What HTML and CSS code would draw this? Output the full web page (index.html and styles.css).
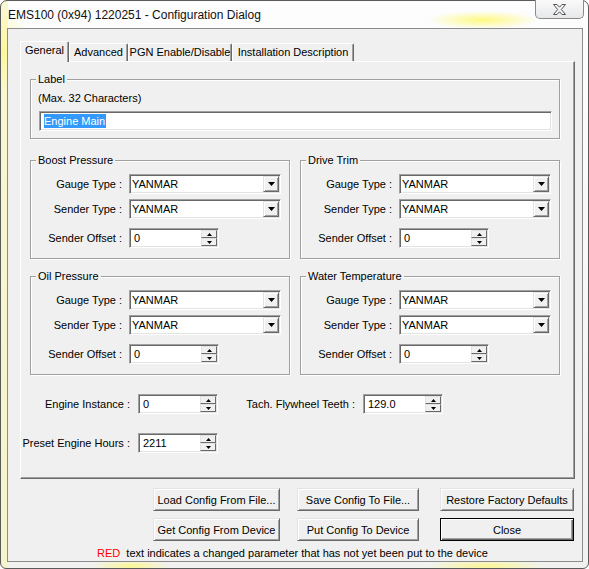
FILE: index.html
```html
<!DOCTYPE html>
<html>
<head>
<meta charset="utf-8">
<link rel="stylesheet" href="styles.css">
</head>
<body>
<div class="window">
  <div class="titlebar">
    <span class="title">EMS100 (0x94) 1220251 - Configuration Dialog</span>
    <div class="close">
      <svg width="13" height="11" viewBox="0 0 13 11"><polygon points="0.5,0.5 4,0.5 6.5,3.2 9,0.5 12.5,0.5 8.3,5.5 12.5,10.5 9,10.5 6.5,7.8 4,10.5 0.5,10.5 4.7,5.5" fill="#f4f4f4" stroke="#555" stroke-width="1" stroke-linejoin="round"/></svg>
    </div>
  </div>
  <div class="client">
    <div class="tab-strip">
      <div class="tab active w1">General</div>
      <div class="tab w2">Advanced</div>
      <div class="tab w3">PGN Enable/Disable</div>
      <div class="tab w4">Installation Description</div>
    </div>
    <div class="panel">
      <div class="group label-group">
        <span class="group-title">Label</span>
        <div class="hint">(Max. 32 Characters)</div>
        <div class="sunken textbox"><span class="sel">Engine Main</span></div>
      </div>

      <div class="groups">
        <div class="group gauge-group">
          <span class="group-title">Boost Pressure</span>
          <div class="row"><span class="lbl">Gauge Type :</span><div class="sunken combo"><span class="val">YANMAR</span><span class="drop"><svg width="7" height="4"><path d="M0 0h7L3.5 4z"/></svg></span></div></div>
          <div class="row r2"><span class="lbl">Sender Type :</span><div class="sunken combo"><span class="val">YANMAR</span><span class="drop"><svg width="7" height="4"><path d="M0 0h7L3.5 4z"/></svg></span></div></div>
          <div class="row r3"><span class="lbl">Sender Offset :</span><div class="sunken spin s90"><span class="sval">0</span><span class="spinbtns"><span class="sb"><svg width="5" height="3"><path d="M2.5 0L5 3H0z"/></svg></span><span class="sb"><svg width="5" height="3"><path d="M0 0h5L2.5 3z"/></svg></span></span></div></div>
        </div>
        <div class="group gauge-group">
          <span class="group-title">Drive Trim</span>
          <div class="row"><span class="lbl">Gauge Type :</span><div class="sunken combo"><span class="val">YANMAR</span><span class="drop"><svg width="7" height="4"><path d="M0 0h7L3.5 4z"/></svg></span></div></div>
          <div class="row r2"><span class="lbl">Sender Type :</span><div class="sunken combo"><span class="val">YANMAR</span><span class="drop"><svg width="7" height="4"><path d="M0 0h7L3.5 4z"/></svg></span></div></div>
          <div class="row r3"><span class="lbl">Sender Offset :</span><div class="sunken spin s90"><span class="sval">0</span><span class="spinbtns"><span class="sb"><svg width="5" height="3"><path d="M2.5 0L5 3H0z"/></svg></span><span class="sb"><svg width="5" height="3"><path d="M0 0h5L2.5 3z"/></svg></span></span></div></div>
        </div>
        <div class="group gauge-group">
          <span class="group-title">Oil Pressure</span>
          <div class="row"><span class="lbl">Gauge Type :</span><div class="sunken combo"><span class="val">YANMAR</span><span class="drop"><svg width="7" height="4"><path d="M0 0h7L3.5 4z"/></svg></span></div></div>
          <div class="row r2"><span class="lbl">Sender Type :</span><div class="sunken combo"><span class="val">YANMAR</span><span class="drop"><svg width="7" height="4"><path d="M0 0h7L3.5 4z"/></svg></span></div></div>
          <div class="row r3"><span class="lbl">Sender Offset :</span><div class="sunken spin s90"><span class="sval">0</span><span class="spinbtns"><span class="sb"><svg width="5" height="3"><path d="M2.5 0L5 3H0z"/></svg></span><span class="sb"><svg width="5" height="3"><path d="M0 0h5L2.5 3z"/></svg></span></span></div></div>
        </div>
        <div class="group gauge-group">
          <span class="group-title">Water Temperature</span>
          <div class="row"><span class="lbl">Gauge Type :</span><div class="sunken combo"><span class="val">YANMAR</span><span class="drop"><svg width="7" height="4"><path d="M0 0h7L3.5 4z"/></svg></span></div></div>
          <div class="row r2"><span class="lbl">Sender Type :</span><div class="sunken combo"><span class="val">YANMAR</span><span class="drop"><svg width="7" height="4"><path d="M0 0h7L3.5 4z"/></svg></span></div></div>
          <div class="row r3"><span class="lbl">Sender Offset :</span><div class="sunken spin s90"><span class="sval">0</span><span class="spinbtns"><span class="sb"><svg width="5" height="3"><path d="M2.5 0L5 3H0z"/></svg></span><span class="sb"><svg width="5" height="3"><path d="M0 0h5L2.5 3z"/></svg></span></span></div></div>
        </div>
      </div>

      <div class="misc">
        <span class="lbl">Engine Instance :</span>
        <div class="sunken spin s80"><span class="sval">0</span><span class="spinbtns"><span class="sb"><svg width="5" height="3"><path d="M2.5 0L5 3H0z"/></svg></span><span class="sb"><svg width="5" height="3"><path d="M0 0h5L2.5 3z"/></svg></span></span></div>
        <span class="lbl">Tach. Flywheel Teeth :</span>
        <div class="sunken spin s80"><span class="sval">129.0</span><span class="spinbtns"><span class="sb"><svg width="5" height="3"><path d="M2.5 0L5 3H0z"/></svg></span><span class="sb"><svg width="5" height="3"><path d="M0 0h5L2.5 3z"/></svg></span></span></div>
        <span class="lbl">Preset Engine Hours :</span>
        <div class="sunken spin s80"><span class="sval">2211</span><span class="spinbtns"><span class="sb"><svg width="5" height="3"><path d="M2.5 0L5 3H0z"/></svg></span><span class="sb"><svg width="5" height="3"><path d="M0 0h5L2.5 3z"/></svg></span></span></div>
      </div>
    </div>

    <div class="btns">
      <div class="btn-row">
        <div class="btn b1">Load Config From File...</div>
        <div class="btn b2">Save Config To File...</div>
        <div class="btn b3">Restore Factory Defaults</div>
      </div>
      <div class="btn-row">
        <div class="btn b1">Get Config From Device</div>
        <div class="btn b2">Put Config To Device</div>
        <div class="btn b3 default">Close</div>
      </div>
    </div>
    <div class="note"><span class="red">RED</span>&nbsp; text indicates a changed parameter that has not yet been put to the device</div>
  </div>
</div>
</body>
</html>
```
FILE: styles.css
```css
html, body {
  margin: 0;
  padding: 0;
}
body {
  width: 589px;
  height: 569px;
  overflow: hidden;
  font-family: "Liberation Sans", Arial, sans-serif;
  font-size: 11px;
  color: #000;
  background: #fff;
}
.window {
  box-sizing: border-box;
  width: 589px;
  height: 569px;
  border: 1px solid #5a5a5a;
  border-radius: 7px 7px 6px 6px;
  background:
    radial-gradient(55px 9px at 482px 19px, rgba(255, 248, 100, 0.8), rgba(255, 248, 100, 0)),
    radial-gradient(30px 40px at 2px 50px, rgba(255, 248, 120, 0.6), rgba(255, 248, 120, 0)),
    radial-gradient(40px 6px at 130px 565px, rgba(255, 248, 120, 0.8), rgba(255, 248, 120, 0)),
    radial-gradient(60px 6px at 485px 565px, rgba(255, 248, 120, 0.8), rgba(255, 248, 120, 0)),
    linear-gradient(to right, rgba(248, 244, 170, 0.55) 0, rgba(248, 244, 170, 0.55) 7px, rgba(248, 244, 170, 0) 7px),
    linear-gradient(#fdfdfd, #f1f2ef);
}
.titlebar {
  height: 27px;
  display: flex;
  justify-content: space-between;
  align-items: flex-start;
}
.title {
  font-size: 12px;
  line-height: 14px;
  margin: 7px 0 0 7px;
  color: #111;
}
.close {
  box-sizing: border-box;
  width: 49px;
  height: 19px;
  margin-top: -1px;
  margin-right: 4px;
  border: 1px solid #8a8a8a;
  border-top: none;
  border-radius: 0 0 5px 5px;
  background: linear-gradient(#fafafa, #e6e8ea);
  display: flex;
  align-items: center;
  justify-content: center;
  padding-top: 1px;
}
.client {
  box-sizing: border-box;
  margin-left: 6px;
  width: 576px;
  height: 534px;
  border: 1px solid #8c8c8c;
  background: #f0f0f0;
  padding: 12px 0 0 12px;
}
.tab-strip {
  display: flex;
  align-items: flex-end;
  height: 20px;
}
.tab {
  box-sizing: border-box;
  height: 18px;
  border-top: 1px solid #fff;
  border-left: 1px solid #fff;
  border-right: 1px solid #696969;
  box-shadow: inset -1px 0 0 #a0a0a0;
  border-radius: 2px 2px 0 0;
  text-align: center;
  line-height: 16px;
  white-space: nowrap;
}
.tab.active {
  height: 21px;
  margin-bottom: -1px;
  position: relative;
  z-index: 1;
  background: #f0f0f0;
  line-height: 17px;
}
.w1 { width: 49px; }
.w2 { width: 59px; }
.w3 { width: 104px; }
.w4 { width: 122px; }
.panel {
  box-sizing: border-box;
  width: 555px;
  height: 418px;
  border: 1px solid;
  border-color: #fff #696969 #696969 #fff;
  box-shadow: inset -1px -1px 0 #a0a0a0;
  padding-top: 17px;
}
.group {
  position: relative;
  box-sizing: border-box;
  border: 1px solid #a0a0a0;
  box-shadow: inset 1px 1px 0 #fff, 1px 1px 0 #fff;
}
.group-title {
  position: absolute;
  top: -7px;
  left: 5px;
  padding: 0 2px;
  line-height: 13px;
  background: #f0f0f0;
  white-space: nowrap;
}
.label-group {
  margin-left: 9px;
  width: 530px;
  height: 60px;
  padding: 12px 0 0 7px;
}
.hint {
  line-height: 13px;
}
.sunken {
  box-sizing: border-box;
  border: 1px solid;
  border-color: #a0a0a0 #fff #fff #a0a0a0;
  box-shadow: inset 1px 1px 0 #696969, inset -1px -1px 0 #e3e3e3;
  background: #fff;
  padding: 1px;
  display: flex;
}
.textbox {
  margin-top: 6px;
  margin-left: 1px;
  width: 513px;
  height: 20px;
  padding-left: 4px;
  align-items: center;
}
.sel {
  background: #3399ff;
  color: #fff;
  line-height: 14px;
  padding: 0 1px 0 0;
}
.groups {
  display: grid;
  grid-template-columns: 260px 260px;
  column-gap: 10px;
  row-gap: 17px;
  margin: 21px 0 0 9px;
}
.gauge-group {
  height: 99px;
  padding-top: 13px;
}
.row {
  display: flex;
  align-items: center;
  height: 20px;
}
.row.r2 { margin-top: 5px; }
.row.r3 { margin-top: 9px; }
.lbl {
  white-space: nowrap;
  text-align: right;
}
.row .lbl {
  width: 91px;
  margin-right: 7px;
  flex: none;
}
.combo {
  width: 152px;
  height: 20px;
}
.val {
  flex: 1;
  line-height: 16px;
  padding-left: 1px;
}
.drop {
  box-sizing: border-box;
  width: 16px;
  height: 16px;
  background: #f0f0f0;
  border: 1px solid;
  border-color: #e3e3e3 #696969 #696969 #e3e3e3;
  box-shadow: inset 1px 1px 0 #fff, inset -1px -1px 0 #a0a0a0;
  display: flex;
  align-items: center;
  justify-content: center;
}
.drop svg, .sb svg {
  display: block;
  fill: #000;
}
.spin {
  height: 20px;
}
.s90 { width: 90px; }
.s80 { width: 80px; }
.sval {
  flex: 1;
  line-height: 16px;
  padding-left: 3px;
}
.spinbtns {
  width: 16px;
  height: 16px;
  display: flex;
  flex-direction: column;
}
.sb {
  box-sizing: border-box;
  height: 8px;
  background: #f0f0f0;
  border: 1px solid;
  border-color: #e3e3e3 #696969 #696969 #e3e3e3;
  display: flex;
  align-items: center;
  justify-content: center;
}
.misc {
  display: grid;
  grid-template-columns: 109px 80px 129px 80px;
  column-gap: 8px;
  row-gap: 19px;
  grid-auto-rows: 20px;
  align-items: center;
  margin-top: 19px;
}
.btns {
  margin-top: 9px;
  padding-left: 133px;
}
.btn-row {
  display: flex;
}
.btn-row + .btn-row {
  margin-top: 7px;
}
.btn {
  box-sizing: border-box;
  height: 23px;
  border: 1px solid;
  border-color: #e3e3e3 #696969 #696969 #e3e3e3;
  box-shadow: inset 1px 1px 0 #fff, inset -1px -1px 0 #a0a0a0;
  background: #f0f0f0;
  display: flex;
  align-items: center;
  justify-content: center;
  white-space: nowrap;
}
.btn.default {
  border-color: #000;
  box-shadow: inset 1px 1px 0 #fff, inset -1px -1px 0 #696969, inset -2px -2px 0 #a0a0a0;
}
.b1 { width: 127px; }
.b2 { width: 122px; margin-left: 17px; }
.b3 { width: 134px; margin-left: 21px; }
.note {
  margin-top: 6px;
  padding-left: 77px;
  line-height: 13px;
  white-space: nowrap;
}
.red {
  color: #f00;
}
```
